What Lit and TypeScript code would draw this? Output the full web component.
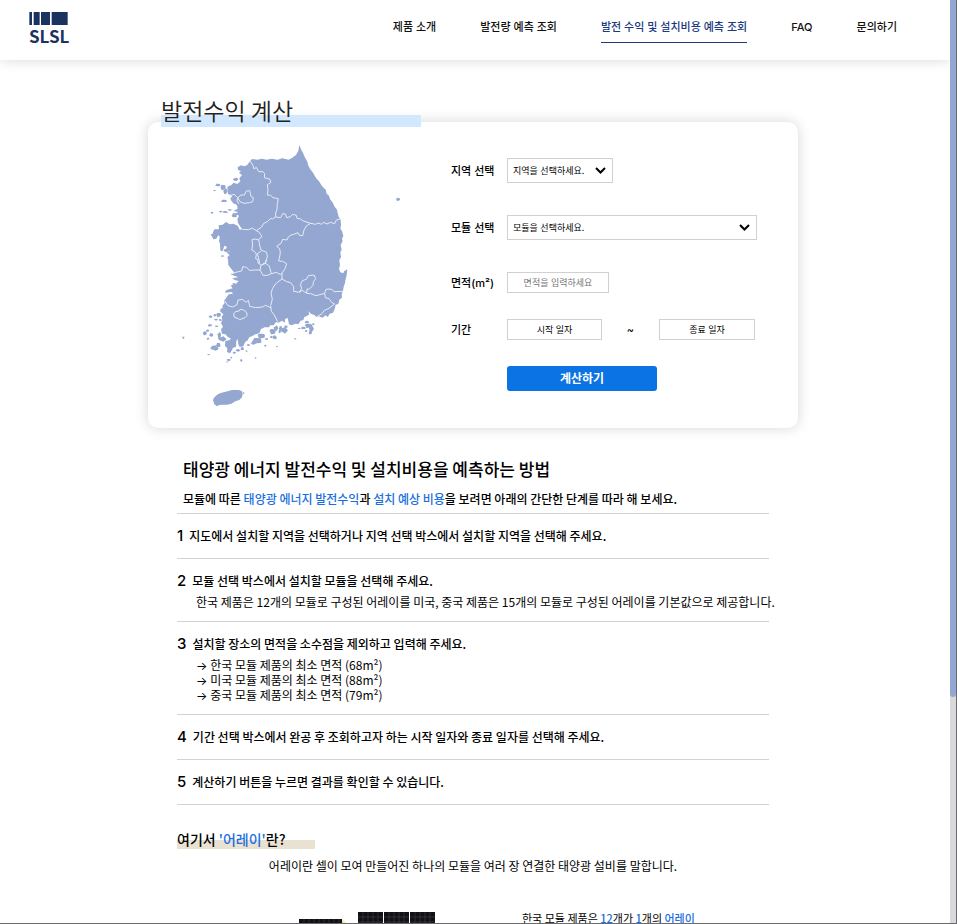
import { LitElement, html, svg, css } from "lit";
import { customElement, property, state } from "lit/decorators.js";

const COAST =
  "M388 30L394 45L399 53L403 64L412 80L415 92L421 103L430 115L438 129L447 139L456 153L467 164L470 176L477 182L480 192L489 204L493 214L501 224L503 234L506 245L512 255L513 270L511 281L516 288L520 302L516 312L518 318L512 330L515 345L511 352L513 366L508 376L510 390L507 402L511 412L520 415L523 408L532 403L530 420L527 432L525 444L521 455L519 468L515 478L516 488L508 494L505 507L497 509L494 522L489 533L478 537L474 546L466 541L458 548L447 544L440 546L433 540L424 537L415 529L418 538L411 543L403 546L400 555L392 557L385 568L376 566L365 571L357 568L353 549L345 552L345 563L336 557L325 563L318 561L311 571L301 571L297 577L284 577L273 582L268 595L256 598L247 603L238 607L232 617L226 620L220 634L209 636L205 628L203 612L199 618L198 636L189 638L186 645L180 655L171 651L172 640L165 633L166 618L178 616L183 610L173 606L167 598L156 596L153 583L159 575L153 565L157 556L155 545L160 538L150 529L152 521L158 520L157 512L164 505L162 497L170 487L176 478L189 476L185 471L165 473L168 466L188 460L182 452L190 448L186 443L198 446L206 438L194 435L187 430L205 427L197 424L180 418L190 417L192 412L184 402L175 390L174 374L172 366L179 361L170 352L180 349L169 345L170 335L163 332L158 348L151 343L151 325L147 321L149 305L145 299L139 311L130 313L125 300L135 296L133 283L147 283L146 271L158 269L168 261L179 268L190 266L203 272L209 284L217 283L210 274L204 263L202 252L207 242L193 236L205 231L190 228L203 221L201 210L190 205L183 196L181 190L187 183L174 178L172 155L183 151L191 143L202 147L211 139L208 129L216 121L207 113L213 108L204 105L203 97L213 91L222 94L231 91L240 79L246 72L262 74L276 71L290 74L305 71L323 74L337 70L356 74L367 68L378 60L385 48Z";

const BORDERS = [
  "M240 78L249 91L252 102L259 97L266 110L279 110L284 116L283 128L300 133L302 143L292 149L294 165L292 180L302 181L309 188L325 191L322 206L321 223L317 234L317 246L307 252L302 250L292 260L280 266L275 276L259 287L247 279L236 284L217 283",
  "M317 246L332 248L338 236L346 237L350 248L361 245L368 238L379 241L381 250L392 252L400 258L422 265L437 268L444 264L454 268L460 262L471 267L481 262L494 266L499 255L510 252",
  "M259 287L268 292L276 305L266 313L268 325L270 335L273 345L290 352L292 366L285 384L298 393L304 416",
  "M422 265L409 273L402 285L398 302L388 301L384 293L371 298L363 300L355 306L351 315L338 313L334 324L320 334L329 341L331 354L326 378L338 379L350 386L345 401L337 413L332 419L319 412L304 416",
  "M266 315L255 312L246 314L248 330L245 345L253 349L259 357L257 371L264 374L264 384L275 391L281 384L285 386L291 375",
  "M273 349L262 356L266 370L269 386",
  "M285 386L273 391L270 405L279 421L292 421L304 416",
  "M182 415L202 411L215 408L218 395L230 397L238 406L255 405L270 405",
  "M336 413L336 432L316 447L308 460L303 474L307 493L302 512L304 529L313 540L323 560",
  "M336 432L350 440L362 443L371 455L371 469L388 472L396 466L411 475L422 476L438 482L453 478L464 475L468 463L483 462L493 470L519 469",
  "M464 475L466 488L477 491L485 502L494 507L477 520L463 526L456 536L441 545",
  "M388 472L395 460L391 449L397 437L409 433L415 422L432 420L437 431L430 440L429 451L417 463L411 462L410 475",
  "M164 497L174 512L188 516L201 509L204 495L217 493L228 502L235 496L239 514L257 518L277 516L287 511L303 519",
  "M191 537L196 530L207 528L210 523L221 525L228 530L232 541L225 548L209 554L201 549L193 547Z",
  "M203 188L213 180L223 180L229 168L239 167L243 184L250 188L248 200L238 203L222 205L210 200Z",
  "M172 178L183 181L192 178L199 184L203 188L201 198L207 207",
];

const JEJU =
  "M129 796L131 790L137 783L146 776L160 772L173 769L186 765L198 765L207 765L216 769L218 778L216 787L208 795L196 799L184 806L171 809L155 809L148 810L141 814L133 808Z";

const ISLANDS: number[][] = [
  [144, 150, 9, 4], [159, 157, 8, 9], [166, 169, 6, 9], [134, 167, 4, 2], [162, 198, 10, 4], [126, 233, 4, 3],
  [152, 230, 5, 3], [166, 231, 9, 3], [193, 241, 8, 7], [180, 225, 7, 2], [197, 133, 8, 5], [137, 295, 10, 11],
  [133, 306, 6, 5], [155, 330, 5, 19], [170, 346, 9, 6], [158, 363, 6, 2], [126, 300, 4, 3], [145, 289, 8, 6],
  [122, 545, 6, 4], [135, 541, 5, 4], [146, 540, 7, 7], [138, 554, 6, 3], [151, 555, 5, 3], [120, 571, 6, 4],
  [104, 595, 6, 6], [113, 587, 5, 4], [124, 600, 7, 5], [140, 574, 5, 3], [148, 602, 5, 11], [158, 612, 12, 7],
  [114, 611, 4, 3], [40, 608, 3, 4], [116, 659, 4, 2], [134, 639, 13, 8], [145, 630, 7, 7], [176, 675, 6, 3],
  [184, 668, 3, 3], [214, 676, 4, 4], [172, 681, 3, 2], [257, 669, 3, 2], [204, 646, 7, 4], [217, 641, 6, 5],
  [230, 648, 4, 2], [193, 653, 5, 3], [235, 630, 5, 3], [261, 617, 16, 9], [274, 603, 11, 8], [250, 625, 8, 4],
  [286, 632, 4, 3], [290, 612, 5, 3], [307, 590, 9, 9], [318, 580, 7, 8], [314, 607, 7, 6], [304, 606, 4, 4],
  [321, 635, 3, 2], [343, 586, 11, 9], [332, 580, 6, 7], [348, 575, 5, 4], [329, 590, 4, 5], [376, 612, 4, 2],
  [400, 579, 8, 4], [415, 572, 11, 7], [424, 582, 7, 10], [411, 561, 7, 4], [421, 593, 5, 6], [408, 588, 4, 3],
  [388, 580, 4, 2], [430, 568, 4, 3], [684, 193, 6, 5], [221, 774, 3, 2],
];

/* Turns an ellipse into a small jagged outline so that islets look like coastline. */
function islet([cx, cy, rx, ry]: number[], seed: number): string {
  const points: string[] = [];
  for (let i = 0; i < 9; i++) {
    const angle = (i / 9) * Math.PI * 2;
    const k = 0.72 + 0.38 * Math.abs(Math.sin(seed * 2.3 + i * 1.9));
    points.push(`${Math.round(cx + Math.cos(angle) * rx * k)} ${Math.round(cy + Math.sin(angle) * ry * k)}`);
  }
  return `M${points.join("L")}Z`;
}

@customElement("korea-map")
class KoreaMap extends LitElement {
  static styles = css`
    :host { display: block; }
    .map { display: block; width: 100%; height: auto; }
    .land { fill: #94a7d0; }
    .border { fill: none; stroke: #e6ebf5; stroke-width: 3; stroke-linejoin: round; }
  `;
  render() {
    return html`<svg class="map" viewBox="0 0 750 825" role="img" aria-label="대한민국 지도">
      <path class="land" d=${COAST} />
      <path class="land" d=${JEJU} />
      ${ISLANDS.map((p, i) => svg`<path class="land" d=${islet(p, i)} />`)}
      ${BORDERS.map((d) => svg`<path class="border" d=${d} />`)}
    </svg>`;
  }
}

@customElement("site-header")
class SiteHeader extends LitElement {
  @property() current = "";
  static styles = css`
    :host { display: block; position: relative; z-index: 2; background: #fff; box-shadow: 0 0 12px rgba(0, 0, 0, 0.16); }
    .bar { display: flex; justify-content: space-between; align-items: flex-start; height: 60px; padding: 0 53px 0 29px; box-sizing: border-box; }
    .logo { display: block; margin-top: 12px; color: #1b335f; text-decoration: none; font: 700 17px/22px "Noto Sans CJK KR", sans-serif; }
    .mark { display: block; width: 39px; height: 13px; fill: #1b335f; }
    .nav { display: flex; gap: 44px; padding-top: 12px; }
    .link { font: 500 11px/30px Inter, "Noto Sans CJK KR", sans-serif; color: #111; text-decoration: none; white-space: nowrap; border-bottom: 1px solid transparent; }
    .active { color: #1d3a80; border-color: #1d3a80; }
  `;
  render() {
    const items = ["제품 소개", "발전량 예측 조회", "발전 수익 및 설치비용 예측 조회", "FAQ", "문의하기"];
    return html`<header class="bar">
      <a class="logo" href="#">
        <svg class="mark" viewBox="0 0 117 39" aria-hidden="true">
          <path d="M1 0h8v39H1zM14 0h18v39H14zM36 0h27v39H36zM68 0h48v39H68z" />
        </svg>SLSL</a>
      <nav class="nav">
        ${items.map((t) => html`<a class="link ${t === this.current ? "active" : ""}" href="#">${t}</a>`)}
      </nav>
    </header>`;
  }
}

@customElement("profit-form")
class ProfitForm extends LitElement {
  static styles = css`
    :host { display: block; font-family: Inter, "Noto Sans CJK KR", sans-serif; }
    .form { display: grid; grid-template-columns: 56px minmax(0, 250px); }
    .row { display: grid; grid-column: 1 / -1; grid-template-columns: subgrid; align-items: center; margin-bottom: 32px; }
    .tight { margin-bottom: 26px; }
    .last { margin-bottom: 0; }
    .label { font-size: 11px; line-height: 20px; font-weight: 500; color: #000; }
    .pick { display: grid; grid-template-columns: 1fr 24px; align-items: center; }
    .short { width: 106px; }
    .select, .input { box-sizing: border-box; width: 100%; border: 1px solid #d0d0d0; border-radius: 0; background: #fff; color: #000; font: 400 9px/13px Inter, "Noto Sans CJK KR", sans-serif; margin: 0; outline: none; }
    .select { grid-area: 1 / 1 / 2 / 3; height: 25px; padding: 0 5px; appearance: none; }
    .chevron { grid-area: 1 / 2 / 2 / 3; width: 11px; height: 7px; justify-self: start; margin-left: 6px; pointer-events: none; fill: none; stroke: #000; stroke-width: 2; }
    .input { height: 21px; padding: 0 6px; text-align: center; }
    .area { width: 102px; }
    .input::placeholder { color: #757575; opacity: 1; }
    .date::placeholder { color: #000; }
    .range { display: grid; grid-template-columns: 95px 1fr 96px; align-items: center; text-align: center; font-size: 11px; padding-right: 2px; }
    .submit { grid-column: 2; width: 150px; height: 25px; border: 0; border-radius: 3px; padding: 0; background: #0b73e3; color: #fff; font: 700 12px/20px Inter, "Noto Sans CJK KR", sans-serif; }
  `;
  private chevron = html`<svg class="chevron" viewBox="0 0 11 7" aria-hidden="true"><path d="M1 1L5.500 5.500L10 1" /></svg>`;
  render() {
    return html`<form class="form" @submit=${(e: Event) => e.preventDefault()}>
      <div class="row">
        <label class="label" for="region">지역 선택</label>
        <div class="pick short"><select class="select" id="region"><option>지역을 선택하세요.</option></select>${this.chevron}</div>
      </div>
      <div class="row">
        <label class="label" for="module">모듈 선택</label>
        <div class="pick"><select class="select" id="module"><option>모듈을 선택하세요.</option></select>${this.chevron}</div>
      </div>
      <div class="row tight">
        <label class="label" for="area">면적(m²)</label>
        <input class="input area" id="area" placeholder="면적을 입력하세요" />
      </div>
      <div class="row tight">
        <label class="label" for="start">기간</label>
        <div class="range">
          <input class="input date" id="start" placeholder="시작 일자" />
          <span>~</span>
          <input class="input date" aria-label="종료 일자" placeholder="종료 일자" />
        </div>
      </div>
      <div class="row last"><button class="submit" type="submit">계산하기</button></div>
    </form>`;
  }
}

@customElement("how-to")
class HowTo extends LitElement {
  static styles = css`
    :host { display: block; font: 400 12px/15px "Noto Sans CJK KR", sans-serif; color: #000; }
    .title { margin: 0; padding: 0 6px; font: 500 17px/28px "Noto Sans CJK KR", sans-serif; }
    .lead { margin: 0; padding: 6px 6px 4px; font-weight: 500; line-height: 20px; border-bottom: 1px solid #d3d3d3; }
    .em { color: #1a6fe0; }
    .steps { list-style: none; margin: 0; padding: 0; }
    .step { padding: 12px 0; border-bottom: 1px solid #d3d3d3; }
    .head { display: flex; align-items: center; gap: 6px; margin: 0; font-weight: 500; line-height: 20px; }
    .num { font: 500 15px/20px Inter, sans-serif; }
    .more { list-style: none; margin: 3px 0 0; padding: 0 0 0 19px; white-space: nowrap; }
    .arrow { font-family: Inter, sans-serif; line-height: 0; }
  `;
  private steps: { text: string; notes?: string[]; arrows?: boolean }[] = [
    { text: "지도에서 설치할 지역을 선택하거나 지역 선택 박스에서 설치할 지역을 선택해 주세요." },
    { text: "모듈 선택 박스에서 설치할 모듈을 선택해 주세요.", notes: ["한국 제품은 12개의 모듈로 구성된 어레이를 미국, 중국 제품은 15개의 모듈로 구성된 어레이를 기본값으로 제공합니다."] },
    { text: "설치할 장소의 면적을 소수점을 제외하고 입력해 주세요.", arrows: true, notes: ["한국 모듈 제품의 최소 면적 (68m²)", "미국 모듈 제품의 최소 면적 (88m²)", "중국 모듈 제품의 최소 면적 (79m²)"] },
    { text: "기간 선택 박스에서 완공 후 조회하고자 하는 시작 일자와 종료 일자를 선택해 주세요." },
    { text: "계산하기 버튼을 누르면 결과를 확인할 수 있습니다." },
  ];
  render() {
    return html`
      <h2 class="title">태양광 에너지 발전수익 및 설치비용을 예측하는 방법</h2>
      <p class="lead">모듈에 따른 <span class="em">태양광 에너지 발전수익</span>과 <span class="em">설치 예상 비용</span>을 보려면 아래의 간단한 단계를 따라 해 보세요.</p>
      <ol class="steps">
        ${this.steps.map((s, i) => html`<li class="step">
          <p class="head"><span class="num">${i + 1}</span><span>${s.text}</span></p>
          ${s.notes ? html`<ul class="more">${s.notes.map((n) => html`<li>${s.arrows ? html`<span class="arrow">→</span> ` : ""}${n}</li>`)}</ul>` : ""}
        </li>`)}
      </ol>`;
  }
}

@customElement("array-info")
class ArrayInfo extends LitElement {
  static styles = css`
    :host { display: block; font: 400 12px/20px "Noto Sans CJK KR", sans-serif; color: #000; }
    .title { margin: 0; width: 138px; font: 500 14px/20px "Noto Sans CJK KR", sans-serif; background: linear-gradient(#e9e2d2, #e9e2d2) bottom / 100% 9px no-repeat; }
    .em { color: #1a6fe0; }
    .text { margin: 7px 0 0; text-align: center; }
    .pair { display: grid; grid-template-columns: 138px 1fr; column-gap: 86px; padding: 32px 0 40px 121px; }
    .panels { display: block; width: 100%; height: auto; margin-top: 3px; }
    .caption { margin: 0; font-size: 11px; }
    .strong { color: #1a6fe0; font-weight: 500; }
  `;
  private panel(x: number, y: number, w: number, h: number) {
    const lines = [];
    for (let i = 5; i < w; i += 5) lines.push(svg`<path d="M${x + i} ${y}v${h}" stroke="#4a484c" stroke-width="0.5" />`);
    for (let j = 5; j < h; j += 5) lines.push(svg`<path d="M${x} ${y + j}h${w}" stroke="#4a484c" stroke-width="0.5" />`);
    return svg`<rect x=${x} y=${y} width=${w} height=${h} fill="#121014" />${lines}`;
  }
  render() {
    return html`
      <h3 class="title">여기서 <span class="em">'어레이'</span>란?</h3>
      <p class="text">어레이란 셀이 모여 만들어진 하나의 모듈을 여러 장 연결한 태양광 설비를 말합니다.</p>
      <div class="pair">
        <svg class="panels" viewBox="0 0 138 60" aria-hidden="true">
          <path d="M44 8L54 18L44 28Z" fill="#efeca0" />
          ${this.panel(1, 8, 43, 50)}${this.panel(60, 1, 25, 58)}${this.panel(86, 1, 25, 58)}${this.panel(112, 1, 25, 58)}
        </svg>
        <p class="caption">한국 모듈 제품은 <span class="strong">12</span>개가 <span class="strong">1</span>개의 <span class="strong">어레이</span></p>
      </div>`;
  }
}

@customElement("app-root")
class AppRoot extends LitElement {
  @state() private shown = 0.755;
  static styles = css`
    :host { display: flex; height: 100vh; box-sizing: border-box; border-right: 1px solid #6b6b6f; border-bottom: 1px solid #6b6b6f; background: #fff; }
    .page { flex: 1; min-width: 0; overflow-y: auto; scrollbar-width: none; }
    .track { flex: none; width: 6px; background: #d9d9d9; }
    .thumb { background: #94a7d0; border-radius: 0 0 3px 3px; }
    .main { display: flex; flex-direction: column; align-items: center; padding: 37px 4px 0 0; }
    .calc { width: 100%; max-width: 650px; }
    .title { position: relative; z-index: 1; width: 260px; margin: 0 0 -5px 13px; padding-bottom: 4px; font: 350 23px/26px "Noto Sans CJK KR", sans-serif; color: #222; background: linear-gradient(#d2e8ff, #d2e8ff) bottom / 100% 12px no-repeat; }
    .card { display: grid; grid-template-columns: 250px 1fr; column-gap: 31px; align-items: start; padding: 0 22px; border-radius: 10px; background: #fff; box-shadow: 0 0 14px rgba(0, 0, 0, 0.16); }
    .map { padding: 13px 0 18px; }
    .form { padding: 36px 0; }
    .guide { width: 100%; max-width: 592px; margin-top: 27px; }
    .array { width: 100%; max-width: 592px; margin-top: 24px; }
  `;
  render() {
    return html`
      <div class="page">
        <site-header current="발전 수익 및 설치비용 예측 조회"></site-header>
        <main class="main">
          <section class="calc">
            <h1 class="title">발전수익 계산</h1>
            <div class="card"><korea-map class="map"></korea-map><profit-form class="form"></profit-form></div>
          </section>
          <how-to class="guide"></how-to>
          <array-info class="array"></array-info>
        </main>
      </div>
      <div class="track"><div class="thumb" style="height:${this.shown * 100}%"></div></div>`;
  }
}
